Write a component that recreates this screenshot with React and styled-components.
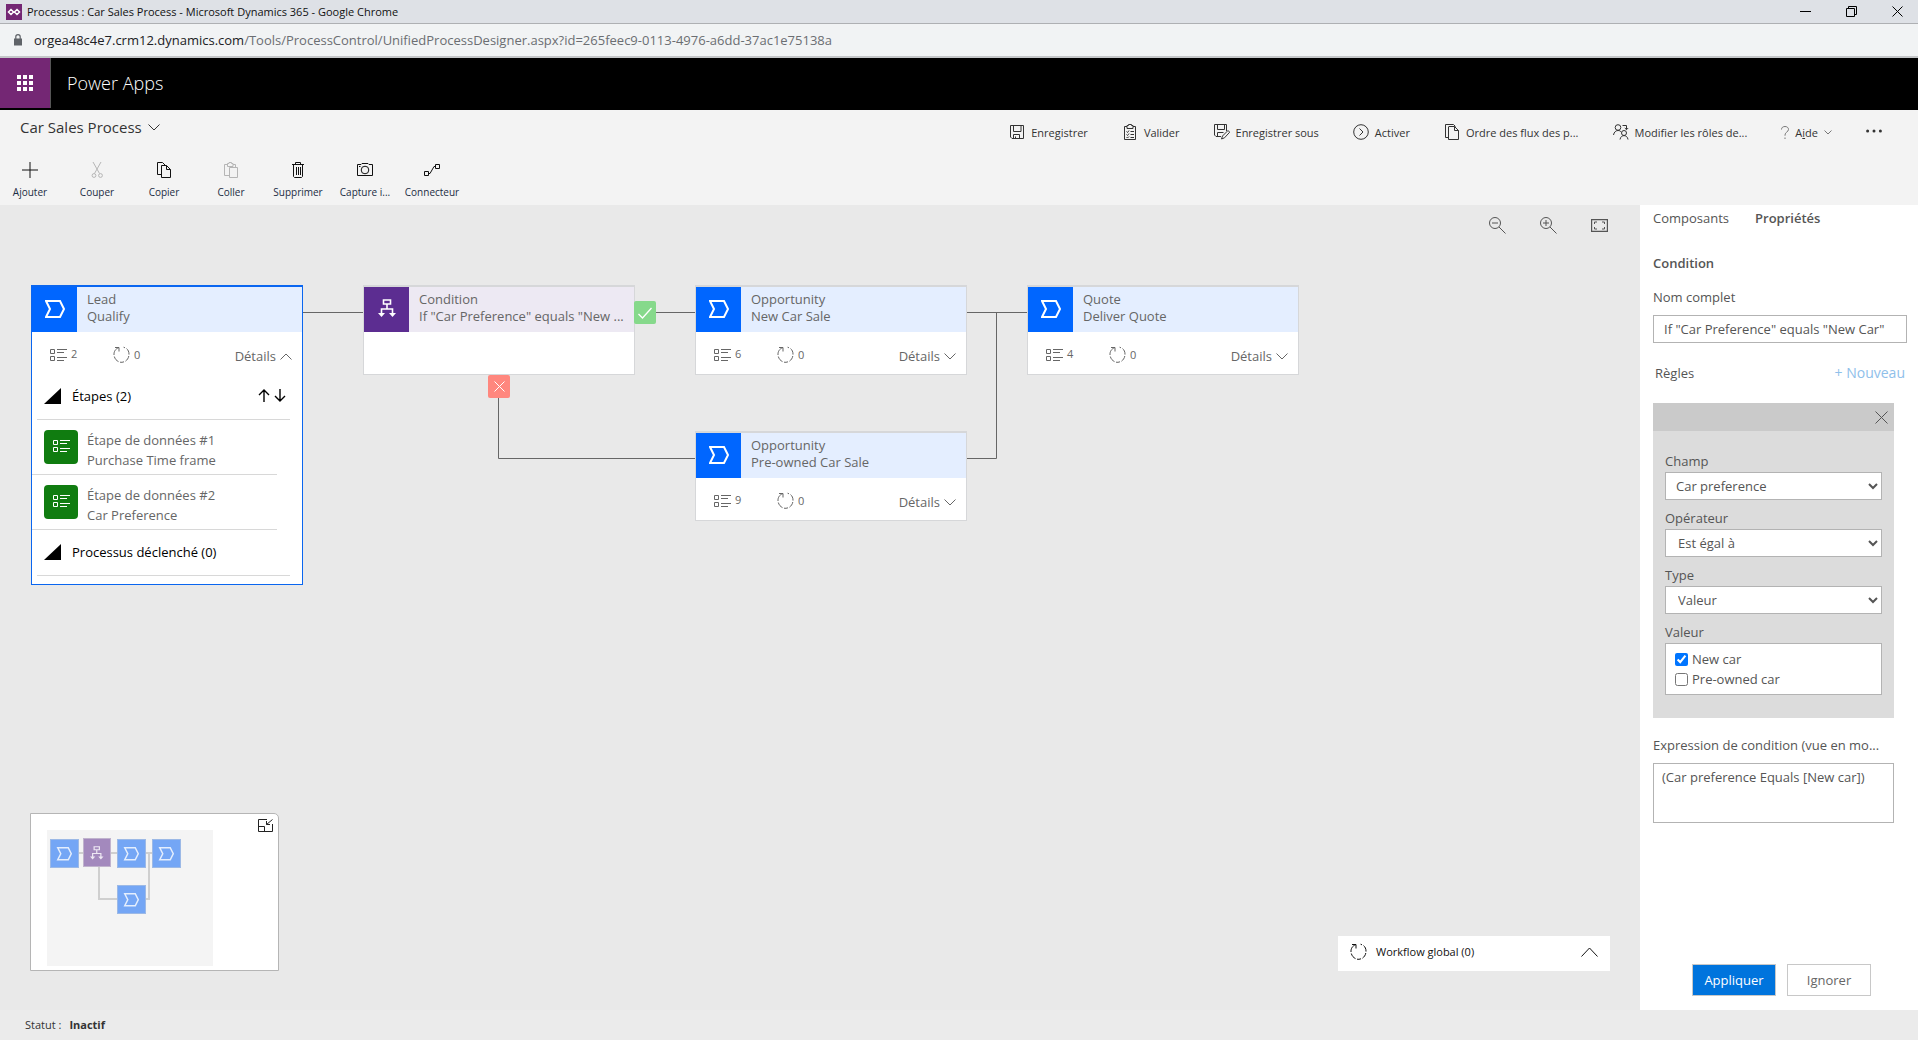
import React, { useState } from 'react'
import styled, { createGlobalStyle } from 'styled-components'

const stages = [
  { id: 'lead', entity: 'Lead', name: 'Qualify', x: 31, y: 80, steps: 2, open: true },
  { id: 'new', entity: 'Opportunity', name: 'New Car Sale', x: 695, y: 80, steps: 6 },
  { id: 'owned', entity: 'Opportunity', name: 'Pre-owned Car Sale', x: 695, y: 226, steps: 9 },
  { id: 'quote', entity: 'Quote', name: 'Deliver Quote', x: 1027, y: 80, steps: 4 },
]

const leadSteps = [
  { title: 'Étape de données #1', field: 'Purchase Time frame' },
  { title: 'Étape de données #2', field: 'Car Preference' },
]

const stageShape = 'M1 1H15L19 9L15 17H1L5 9Z'

const Svg = ({ w = 16, h = 16, sw = 1, children, ...rest }) => (
  <svg
    width={w}
    height={h}
    viewBox={`0 0 ${w} ${h}`}
    fill='none'
    stroke='currentColor'
    strokeWidth={sw}
    aria-hidden='true'
    {...rest}
  >
    {children}
  </svg>
)

const ChevronDown = ({ w = 12, h = 7 }) => (
  <Svg w={w} h={h}>
    <path d={`M.5 .5L${w / 2} ${h - 1}L${w - 0.5} .5`} />
  </Svg>
)

const ChevronUp = ({ w = 12, h = 7 }) => (
  <Svg w={w} h={h}>
    <path d={`M.5 ${h - 0.5}L${w / 2} 1L${w - 0.5} ${h - 0.5}`} />
  </Svg>
)

const CloseIcon = ({ size = 11 }) => (
  <Svg w={size} h={size}>
    <path d={`M.5 .5L${size - 0.5} ${size - 0.5}M${size - 0.5} .5L.5 ${size - 0.5}`} />
  </Svg>
)

const StageIcon = () => (
  <Svg w={20} h={18} sw={2}>
    <path d={stageShape} />
  </Svg>
)

const BranchGlyph = () => (
  <>
    <path d='M5.5 1H12.5V5H5.5ZM9 5V10M3.5 15V10H14.5V15' strokeWidth='1.6' />
    <path d='M0 14H7L3.5 18ZM11 14H18L14.5 18Z' fill='currentColor' stroke='none' />
  </>
)

const BranchIcon = () => (
  <Svg w={18} h={19} sw={2}>
    <BranchGlyph />
  </Svg>
)

const StepsIcon = () => (
  <Svg w={17} h={13}>
    <path d='M.5 1.5H4.5V5.5H.5ZM.5 8.5H4.5V12.5H.5ZM7 1.5H17M7 4.5H14M7 9.5H17M7 12.5H14' />
  </Svg>
)

const CycleIcon = () => (
  <Svg w={17} h={17}>
    <path d='M2 1.5H6V5.5M6 1.5C2 3 .8 6 1 9' />
    <path d='M1.3 10.5C2 13 3.5 14.6 5.5 15.6M7 16.2Q9 16.6 11 15.8M12.5 15.2C14 14 15.4 12.4 15.8 10M16 8.6C16.2 6 15 3.6 13.5 2.6M12 1.8L10.6 1.2' />
  </Svg>
)

const commandIcons = {
  save: (
    <path d='M1.5 1.5H14.5V14.5H3L1.5 13ZM4.5 1.5V7.5H12V1.5M4.5 14.5V10.5H10.5V14.5M6.5 12.5V14.5' />
  ),
  validate: (
    <path d='M5 2.5H2.5V15.5H13.5V2.5H11M5 1.5H6.5V.5H9.5V1.5H11V4.5H5ZM4.5 7.5L5.5 8.5L7 6.5M8.5 7.5H12M4.5 10.5L5.5 11.5L7 9.5M8.5 10.5H12M4.5 13L5.5 14L7 12.5M8.5 13.5H12' />
  ),
  saveAs: (
    <path d='M7 12.5H2L.5 11V.5H12.5V7M3.5 .5V5.5H10.5V.5M3.5 12.5V8.5H9.5M7.5 15L8.5 12L14 6.5L15.7 8.2L10.5 13.8Z' />
  ),
  activate: (
    <>
      <circle cx='8' cy='8' r='7.3' />
      <path d='M6.5 4.5L10 8L6.5 11.5' />
    </>
  ),
  order: <path d='M4.5 3V15.5H14.5V6.5L10.5 2.5H4.5M10.5 2.5V6.5H14.5M4 13.5H1.5V.5H9.5L11.5 2.5' />,
  roles: (
    <>
      <circle cx='5' cy='3.5' r='2.8' />
      <circle cx='11' cy='9' r='2.5' />
      <path d='M.5 11C1 8 3 6.5 5 6.5C6.5 6.5 7.5 7 8 8M7 15.5C7.5 12.5 9.5 11.6 11 11.6C12.7 11.6 14.7 12.8 15 15.5M9.5 1.5H13.5V5.5M11.8 4L13.5 5.7L15.2 4' />
    </>
  ),
}

const commands = [
  { icon: 'save', label: 'Enregistrer' },
  { icon: 'validate', label: 'Valider' },
  { icon: 'saveAs', label: 'Enregistrer sous' },
  { icon: 'activate', label: 'Activer' },
  { icon: 'order', label: 'Ordre des flux des p...' },
  { icon: 'roles', label: 'Modifier les rôles de...' },
]

const tools = [
  { label: 'Ajouter', icon: <path d='M8 0V16M0 8H16' /> },
  {
    label: 'Couper',
    off: true,
    icon: (
      <>
        <path d='M4 0L10.5 11.5M12 0L5.5 11.5' />
        <circle cx='5' cy='13.5' r='1.9' />
        <circle cx='11.5' cy='13.5' r='1.9' />
      </>
    ),
  },
  {
    label: 'Copier',
    icon: <path d='M5.5 12.5H1.5V.5H6.5L9.5 3.5M5.5 3.5H10.5L14.5 7.5V15.5H5.5ZM10.5 3.5V7.5H14.5' />,
  },
  {
    label: 'Coller',
    off: true,
    icon: <path d='M6.5 13.5H1.5V2.5H4M10 2.5H12.5V5.5M4.5 1.5H6V.5H8.5V1.5H10V4.5H4.5ZM6.5 5.5H14.5V15.5H6.5Z' />,
  },
  {
    label: 'Supprimer',
    icon: <path d='M2 2.5H14M5.5 2.5V.5H10.5V2.5M3.5 2.5V14.5L4.5 15.5H11.5L12.5 14.5V2.5M6.5 5V13M8.5 5V13M10.5 5V13' />,
  },
  {
    label: 'Capture i...',
    icon: (
      <>
        <path d='M.5 2.5H4L5 1.5H11L12 2.5H15.5V13.5H.5Z' />
        <circle cx='8' cy='8' r='3.8' />
        <path d='M2 4.5H3.5' />
      </>
    ),
  },
  { label: 'Connecteur', icon: <path d='M.5 9.5H4.5V13.5H.5ZM11.5 2.5H15.5V6.5H11.5ZM4.5 11.5H6L10 4.5H11.5' /> },
]

function Stage({ stage }) {
  return (
    <Node $x={stage.x} $y={stage.y} $selected={stage.open}>
      <NodeHeader>
        <NodeIcon>
          <StageIcon />
        </NodeIcon>
        <NodeTitle>
          <span>{stage.entity}</span>
          <span>{stage.name}</span>
        </NodeTitle>
      </NodeHeader>
      <Stats>
        <Stat>
          <StepsIcon /> {stage.steps}
        </Stat>
        <Stat>
          <CycleIcon /> 0
        </Stat>
        <DetailsButton type='button' aria-expanded={!!stage.open}>
          Détails {stage.open ? <ChevronUp /> : <ChevronDown />}
        </DetailsButton>
      </Stats>
      {stage.open && <StageDetails />}
    </Node>
  )
}

function StageDetails() {
  return (
    <>
      <Section>
        <Triangle />
        Étapes (2)
        <Arrows aria-label='Réorganiser' type='button'>
          <Svg w={28} h={13} sw={1.4}>
            <path d='M6 13V1M1 6L6 1L11 6M22 0V12M17 7L22 12L27 7' />
          </Svg>
        </Arrows>
      </Section>
      {leadSteps.map((step) => (
        <Step key={step.title}>
          <StepIcon>
            <StepsIcon />
          </StepIcon>
          <StepText>
            <span>{step.title}</span>
            <span>{step.field}</span>
          </StepText>
        </Step>
      ))}
      <Section>
        <Triangle />
        Processus déclenché (0)
      </Section>
      <NodeEnd />
    </>
  )
}

const Triangle = () => (
  <svg width='17' height='16' viewBox='0 0 17 16' aria-hidden='true'>
    <path d='M17 0V16H0Z' fill='#000' />
  </svg>
)

function MiniMap() {
  const boxes = [
    [3, 9],
    [70, 9],
    [105, 9],
    [70, 55],
  ]
  return (
    <MiniMapBox>
      <MiniButton type='button' aria-label='Réduire la mini-carte'>
        <Svg w={15} h={13}>
          <path d='M9 .5H.5V12.5H14.5V5M.5 7.5H6.5V12.5M14.5 .5L8.5 5.5M8.5 2V5.5H12' />
        </Svg>
      </MiniButton>
      <svg width='166' height='136' viewBox='0 0 166 136' role='img' aria-label='Mini-carte'>
        <rect width='166' height='136' fill='#f4f4f4' />
        <path d='M30 23H118M52 36V69H72M98 69H102V23' fill='none' stroke='#cfcfcf' strokeWidth='2' />
        {boxes.map(([x, y]) => (
          <g key={`${x}-${y}`} transform={`translate(${x} ${y})`}>
            <rect x='.5' y='.5' width='28' height='28' fill='#74a6f5' stroke='#9cb9e6' />
            <g transform='translate(7 8) scale(.75)'>
              <path d={stageShape} fill='none' stroke='#e4eefd' strokeWidth='2' />
            </g>
          </g>
        ))}
        <g transform='translate(36 8)' color='#eee8f3'>
          <rect x='.5' y='.5' width='27' height='28' fill='#a389bd' stroke='#c0b3cd' />
          <g transform='translate(7 8) scale(.75)' fill='none' stroke='currentColor' strokeWidth='2'>
            <BranchGlyph />
          </g>
        </g>
      </svg>
    </MiniMapBox>
  )
}

function Properties() {
  const [values, setValues] = useState({ new: true, owned: false })
  const toggle = (key) => setValues({ ...values, [key]: !values[key] })
  return (
    <Panel>
      <Tabs>
        <Tab type='button'>Composants</Tab>
        <Tab type='button' $active>
          Propriétés
        </Tab>
      </Tabs>
      <PanelTitle>Condition</PanelTitle>
      <Label htmlFor='fullName'>Nom complet</Label>
      <TextInput id='fullName' defaultValue='If "Car Preference" equals "New Car"' />
      <RulesRow>
        <span>Règles</span>
        <NewRule type='button'>+ Nouveau</NewRule>
      </RulesRow>
      <Rule>
        <RuleHeader>
          <IconButton type='button' aria-label='Supprimer la règle'>
            <CloseIcon size={13} />
          </IconButton>
        </RuleHeader>
        <RuleBody>
          <Field>
            <label htmlFor='field'>Champ</label>
            <Select id='field'>
              <option>Car preference</option>
            </Select>
          </Field>
          <Field>
            <label htmlFor='operator'>Opérateur</label>
            <Select id='operator' $indent>
              <option>Est égal à</option>
            </Select>
          </Field>
          <Field>
            <label htmlFor='type'>Type</label>
            <Select id='type' $indent>
              <option>Valeur</option>
            </Select>
          </Field>
          <Field>
            <span id='valueLabel'>Valeur</span>
            <Values role='group' aria-labelledby='valueLabel'>
              <label>
                <input type='checkbox' checked={values.new} onChange={() => toggle('new')} />
                New car
              </label>
              <label>
                <input type='checkbox' checked={values.owned} onChange={() => toggle('owned')} />
                Pre-owned car
              </label>
            </Values>
          </Field>
        </RuleBody>
      </Rule>
      <ExpressionLabel htmlFor='expression'>Expression de condition (vue en mo...</ExpressionLabel>
      <Expression id='expression' readOnly value='(Car preference Equals [New car])' />
      <Actions>
        <ActionButton type='button' $primary>
          Appliquer
        </ActionButton>
        <ActionButton type='button'>Ignorer</ActionButton>
      </Actions>
    </Panel>
  )
}

export default function App() {
  return (
    <Page>
      <GlobalStyle />
      <TitleBar>
        <Svg w={16} h={16}>
          <rect width='16' height='16' fill='#742774' stroke='none' />
          <path d='M5 5.5L7.5 8L5 10.5L2.5 8ZM11 5.5L13.5 8L11 10.5L8.5 8Z' stroke='#fff' strokeWidth='1.5' />
        </Svg>
        <span>Processus : Car Sales Process - Microsoft Dynamics 365 - Google Chrome</span>
        <WindowButtons>
          <button type='button' aria-label='Réduire'>
            <Svg w={11} h={11}>
              <path d='M0 5.5H11' />
            </Svg>
          </button>
          <button type='button' aria-label='Restaurer'>
            <Svg w={11} h={11}>
              <path d='M.5 2.5H8.5V10.5H.5ZM2.5 2.5V.5H10.5V8.5H8.5' />
            </Svg>
          </button>
          <button type='button' aria-label='Fermer'>
            <CloseIcon />
          </button>
        </WindowButtons>
      </TitleBar>
      <AddressBar>
        <Svg w={8} h={12}>
          <path d='M0 4.5H8V11.5H0Z' fill='#5f6368' stroke='none' />
          <path d='M1.8 5V2.8A2.2 2.2 0 0 1 6.2 2.8V5' stroke='#5f6368' strokeWidth='1.2' />
        </Svg>
        <span>
          orgea48c4e7.crm12.dynamics.com
          <i>/Tools/ProcessControl/UnifiedProcessDesigner.aspx?id=265feec9-0113-4976-a6dd-37ac1e75138a</i>
        </span>
      </AddressBar>
      <AppHeader>
        <Waffle type='button' aria-label="Lanceur d'applications">
          <svg width='16' height='16' viewBox='0 0 16 16' fill='#fff' aria-hidden='true'>
            <path d='M0 0h4v4H0zM6 0h4v4H6zM12 0h4v4h-4zM0 6h4v4H0zM6 6h4v4H6zM12 6h4v4h-4zM0 12h4v4H0zM6 12h4v4H6zM12 12h4v4h-4z' />
          </svg>
        </Waffle>
        <span>Power Apps</span>
      </AppHeader>
      <CommandBar>
        <CommandRow>
          <ProcessName type='button'>
            Car Sales Process <ChevronDown />
          </ProcessName>
          <Commands>
            {commands.map((c) => (
              <Command type='button' key={c.label}>
                <Svg>{commandIcons[c.icon]}</Svg>
                {c.label}
              </Command>
            ))}
            <Command type='button' $help>
              <Svg w={8} h={13}>
                <path d='M.5 3.5C.5 1.5 2 .5 4 .5C6 .5 7.5 1.7 7.5 3.4C7.5 6 4 6 4 9V9.7M4 11.5V13' />
              </Svg>
              <span>
                A<u>i</u>de
              </span>
              <ChevronDown w={8} h={5} />
            </Command>
            <Command type='button' aria-label='Plus'>
              <svg width='16' height='8' viewBox='0 0 16 8' fill='currentColor' aria-hidden='true'>
                <circle cx='1.6' cy='3' r='1.5' />
                <circle cx='8' cy='3' r='1.5' />
                <circle cx='14.4' cy='3' r='1.5' />
              </svg>
            </Command>
          </Commands>
        </CommandRow>
        <ToolRow>
          {tools.map((t) => (
            <Tool type='button' key={t.label} $off={t.off}>
              <Svg>{t.icon}</Svg>
              {t.label}
            </Tool>
          ))}
        </ToolRow>
      </CommandBar>
      <Main>
        <Canvas>
          <Connectors width='1040' height='280' viewBox='0 0 1040 280' aria-hidden='true'>
            <path d='M303 107.5H1027M498.5 190V253.5H695M967 253.5H996.5V107.5' />
          </Connectors>
          {stages.map((stage) => (
            <Stage key={stage.id} stage={stage} />
          ))}
          <Node $x={363} $y={80}>
            <NodeHeader $condition>
              <NodeIcon $condition>
                <BranchIcon />
              </NodeIcon>
              <NodeTitle>
                <span>Condition</span>
                <span>If "Car Preference" equals "New ...</span>
              </NodeTitle>
            </NodeHeader>
            <Stats />
          </Node>
          <Badge $x={634} $y={96} $color='#86d98b'>
            <Svg w={14} h={12}>
              <path d='M.5 7L4.5 11L13.5 1' strokeWidth='1.3' />
            </Svg>
          </Badge>
          <Badge $x={488} $y={170} $color='#ff877e'>
            <CloseIcon />
          </Badge>
          <ZoomTools>
            <IconButton type='button' aria-label='Zoom arrière'>
              <Svg w={17} h={17}>
                <circle cx='6' cy='6' r='5.5' />
                <path d='M10 10L16.5 16.5M3 6H9' />
              </Svg>
            </IconButton>
            <IconButton type='button' aria-label='Zoom avant'>
              <Svg w={17} h={17}>
                <circle cx='6' cy='6' r='5.5' />
                <path d='M10 10L16.5 16.5M3 6H9M6 3V9' />
              </Svg>
            </IconButton>
            <IconButton type='button' aria-label='Ajuster'>
              <Svg w={17} h={13}>
                <path d='M.5 .5H16.5V12.5H.5Z' strokeWidth='1.4' />
                <path d='M3.5 5V3H6M11 3H13.5V5M3.5 8V10H6M11 10H13.5V8' />
              </Svg>
            </IconButton>
          </ZoomTools>
          <MiniMap />
          <Workflow type='button'>
            <CycleIcon />
            <span>Workflow global (0)</span>
            <ChevronUp w={17} h={10} />
          </Workflow>
        </Canvas>
        <Properties />
      </Main>
      <StatusBar>
        Statut : <strong>Inactif</strong>
      </StatusBar>
    </Page>
  )
}

const GlobalStyle = createGlobalStyle`
  * {
    box-sizing: border-box;
  }
  body {
    margin: 0;
    font-family: 'Open Sans', 'Noto Sans', sans-serif;
    font-size: 13px;
  }
  button, input, select, textarea {
    font: inherit;
    color: inherit;
    margin: 0;
  }
  button {
    display: flex;
    align-items: center;
    padding: 0;
    border: 0;
    background: none;
    white-space: nowrap;
    cursor: pointer;
  }
  svg {
    flex: none;
    display: block;
  }
`

const Page = styled.div`
  display: flex;
  flex-direction: column;
  min-height: 100vh;
  background: #ebebeb;
`

const TitleBar = styled.div`
  display: flex;
  align-items: center;
  gap: 5px;
  height: 24px;
  padding-left: 6px;
  background: #dee1e6;
  border-bottom: 1px solid #aeb0b3;
  font-size: 11px;
  color: #111;
`

const WindowButtons = styled.div`
  display: flex;
  gap: 4px;
  margin-left: auto;
  color: #000;
  button {
    justify-content: center;
    width: 42px;
    height: 20px;
  }
`

const AddressBar = styled.div`
  display: flex;
  align-items: center;
  gap: 12px;
  height: 34px;
  padding-left: 14px;
  background: #f1f3f4;
  border-bottom: 2px solid #c4c6c8;
  color: #202124;
  i {
    font-style: normal;
    color: #6b6e72;
  }
`

const AppHeader = styled.header`
  display: flex;
  align-items: flex-start;
  gap: 16px;
  height: 52px;
  background: #000;
  color: #fff;
  font-size: 18px;
  font-weight: 300;
  line-height: 50px;
`

const Waffle = styled.button`
  justify-content: center;
  width: 51px;
  height: 50px;
  background: #742774;
  border-right: 1px solid #555;
`

const CommandBar = styled.div`
  height: 95px;
  background: #f3f3f3;
`

const CommandRow = styled.div`
  display: flex;
  justify-content: space-between;
  align-items: flex-start;
  height: 46px;
  padding: 0 36px 0 20px;
`

const ProcessName = styled.button`
  gap: 6px;
  height: 34px;
  font-size: 15px;
  font-weight: 500;
  color: #333;
`

const Commands = styled.div`
  display: flex;
  gap: 34px;
  height: 44px;
`

const Command = styled.button`
  gap: 6px;
  font-size: 11px;
  color: #333;
  svg {
    color: ${({ $help }) => ($help ? '#777' : '#333')};
  }
`

const ToolRow = styled.div`
  display: flex;
  gap: 7px;
`

const Tool = styled.button`
  flex-direction: column;
  gap: 6px;
  width: 60px;
  padding-top: 6px;
  font-size: 10px;
  line-height: 16px;
  color: #1b2c44;
  svg {
    color: ${({ $off }) => ($off ? '#b5b5b5' : '#111')};
  }
`

const Main = styled.main`
  flex: 1;
  display: flex;
`

const Canvas = styled.section`
  position: relative;
  flex: 1;
  min-height: 640px;
  background: #e9e9e9;
  color: #666;
`

const Connectors = styled.svg`
  position: absolute;
  top: 0;
  left: 0;
  fill: none;
  stroke: #666;
`

const Node = styled.article`
  position: absolute;
  left: ${({ $x }) => $x}px;
  top: ${({ $y }) => $y}px;
  width: 272px;
  background: #fff;
  border: 1px solid ${({ $selected }) => ($selected ? '#0a66f0' : '#d6d7d9')};
  border-top-width: 2px;
`

const NodeHeader = styled.div`
  display: flex;
  height: 45px;
  background: ${({ $condition }) => ($condition ? '#ede9f3' : '#e4eeff')};
`

const NodeIcon = styled.div`
  flex: none;
  display: flex;
  align-items: center;
  justify-content: center;
  width: 45px;
  padding-bottom: 2px;
  background: ${({ $condition }) => ($condition ? '#5c2d91' : '#0066ff')};
  color: #fff;
`

const NodeTitle = styled.div`
  display: flex;
  flex-direction: column;
  padding: 4px 0 0 10px;
  line-height: 17px;
  white-space: nowrap;
`

const Stats = styled.div`
  display: flex;
  align-items: flex-start;
  height: 42px;
  padding: 14px 10px 0 18px;
`

const Stat = styled.span`
  display: flex;
  align-items: center;
  gap: 4px;
  width: 63px;
  font-size: 11px;
  line-height: 16px;
`

const DetailsButton = styled.button`
  gap: 4px;
  margin-left: auto;
  line-height: 20px;
`

const Section = styled.div`
  display: flex;
  align-items: center;
  gap: 11px;
  height: 46px;
  margin: 0 12px 0 5px;
  padding: 0 4px 2px 7px;
  border-bottom: 1px solid #d8d8d8;
  color: #000;
`

const Arrows = styled.button`
  margin-left: auto;
`

const Step = styled.div`
  display: flex;
  gap: 9px;
  height: 55px;
  margin-right: 25px;
  padding: 10px 0 0 12px;
  border-bottom: 1px solid #d8d8d8;
`

const StepIcon = styled.span`
  display: flex;
  align-items: center;
  justify-content: center;
  width: 34px;
  height: 34px;
  padding-bottom: 4px;
  background: #107c10;
  border-radius: 4px;
  color: #fff;
`

const StepText = styled.span`
  display: flex;
  flex-direction: column;
  line-height: 20px;
`

const NodeEnd = styled.div`
  height: 8px;
`

const Badge = styled.span`
  position: absolute;
  left: ${({ $x }) => $x}px;
  top: ${({ $y }) => $y}px;
  display: flex;
  align-items: center;
  justify-content: center;
  width: 22px;
  height: 23px;
  background: ${({ $color }) => $color};
  border-radius: 2px;
  color: #fff;
`

const ZoomTools = styled.div`
  position: absolute;
  top: 12px;
  right: 32px;
  display: flex;
  gap: 34px;
  color: #555;
`

const IconButton = styled.button`
  justify-content: center;
`

const MiniMapBox = styled.div`
  position: absolute;
  left: 30px;
  bottom: 39px;
  width: 249px;
  height: 158px;
  padding: 16px;
  background: #fff;
  border: 1px solid #b5b5b5;
  border-top-right-radius: 5px;
`

const MiniButton = styled.button`
  position: absolute;
  top: 5px;
  right: 5px;
  color: #222;
`

const Workflow = styled.button`
  position: absolute;
  right: 30px;
  bottom: 39px;
  gap: 9px;
  width: 272px;
  height: 35px;
  padding: 0 12px 4px 12px;
  background: #fff;
  font-size: 11px;
  color: #111;
  svg:last-child {
    margin-left: auto;
  }
`

const Panel = styled.aside`
  display: flex;
  flex-direction: column;
  width: 278px;
  padding: 0 24px 14px 13px;
  background: #fff;
  color: #555;
  line-height: 20px;
`

const Tabs = styled.div`
  display: flex;
  gap: 26px;
  height: 26px;
`

const Tab = styled.button`
  font-weight: ${({ $active }) => ($active ? 600 : 400)};
`

const PanelTitle = styled.h2`
  margin: 22px 0 14px;
  font-size: 13px;
  font-weight: 600;
  line-height: 20px;
`

const Label = styled.label`
  margin-bottom: 8px;
`

const TextInput = styled.input`
  height: 28px;
  margin-right: -13px;
  padding: 0 10px;
  border: 1px solid #b3b3b3;
`

const RulesRow = styled.div`
  display: flex;
  justify-content: space-between;
  margin: 20px -11px 20px 2px;
`

const NewRule = styled.button`
  font-size: 14px;
  color: #8fc0ea;
`

const Rule = styled.div`
  background: #dcdcdc;
`

const RuleHeader = styled.div`
  display: flex;
  justify-content: flex-end;
  height: 28px;
  padding-right: 6px;
  background: #cacaca;
`

const RuleBody = styled.div`
  display: flex;
  flex-direction: column;
  gap: 8px;
  padding: 20px 12px 23px;
`

const Field = styled.div`
  display: flex;
  flex-direction: column;
  gap: 1px;
`

const Select = styled.select`
  height: 28px;
  padding: 0 0 0 ${({ $indent }) => ($indent ? 8 : 6)}px;
  background: #fff;
  border: 1px solid #b3b3b3;
  border-radius: 0;
`

const Values = styled.div`
  display: flex;
  flex-direction: column;
  height: 52px;
  padding: 5px 9px;
  background: #fff;
  border: 1px solid #b3b3b3;
  label {
    display: flex;
    align-items: center;
    gap: 4px;
  }
  input {
    width: 13px;
    height: 13px;
    accent-color: #0075ff;
  }
`

const ExpressionLabel = styled.label`
  margin: 17px 0 8px;
  white-space: nowrap;
`

const Expression = styled.textarea`
  height: 60px;
  padding: 3px 8px;
  border: 1px solid #b3b3b3;
  resize: none;
`

const Actions = styled.div`
  display: flex;
  justify-content: flex-end;
  gap: 11px;
  margin: auto 23px 0 0;
`

const ActionButton = styled.button`
  justify-content: center;
  width: 84px;
  height: 32px;
  background: ${({ $primary }) => ($primary ? '#0074dd' : '#fff')};
  border: 1px solid #c8c8c8;
  color: ${({ $primary }) => ($primary ? '#fff' : '#666')};
`

const StatusBar = styled.footer`
  display: flex;
  align-items: center;
  gap: 8px;
  height: 30px;
  padding: 0 25px 2px;
  font-size: 11px;
  color: #333;
`
